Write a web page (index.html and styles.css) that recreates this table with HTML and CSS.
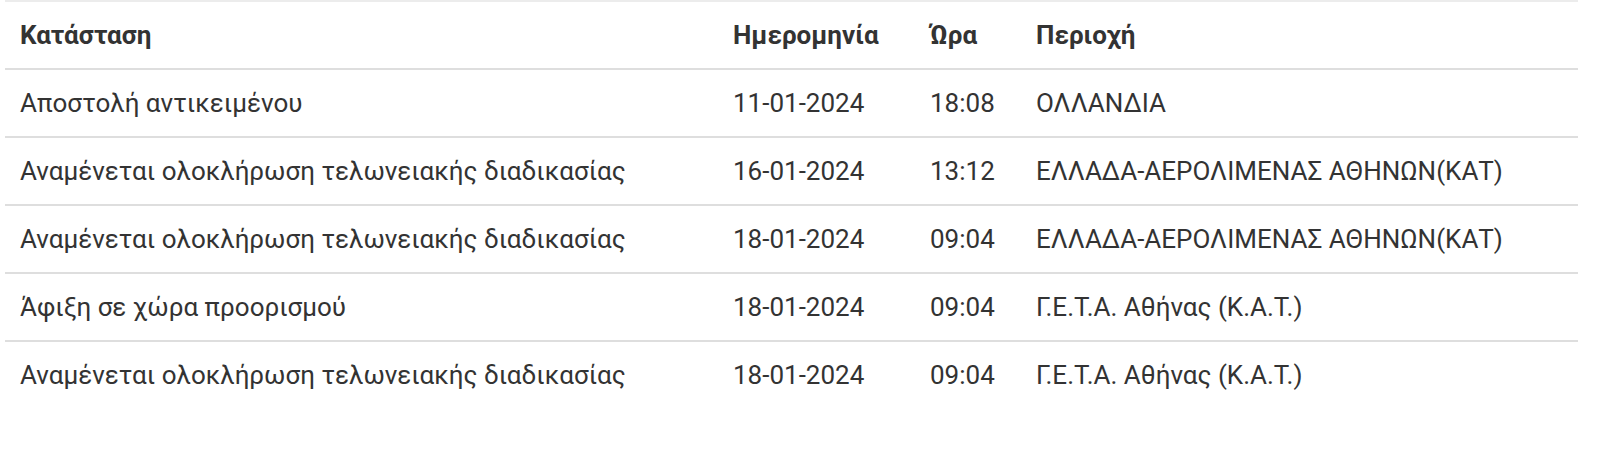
FILE: index.html
```html
<!DOCTYPE html>
<html lang="el">
<head>
<meta charset="utf-8">
<link rel="stylesheet" href="styles.css">
</head>
<body>
<div class="wrap">
  <table class="track">
    <colgroup>
      <col class="c-status"><col class="c-date"><col class="c-time"><col class="c-area">
    </colgroup>
    <thead>
      <tr><th>Κατάσταση</th><th>Ημερομηνία</th><th>Ώρα</th><th>Περιοχή</th></tr>
    </thead>
    <tbody>
      <tr><td>Αποστολή αντικειμένου</td><td>11-01-2024</td><td>18:08</td><td>ΟΛΛΑΝΔΙΑ</td></tr>
      <tr><td>Αναμένεται ολοκλήρωση τελωνειακής διαδικασίας</td><td>16-01-2024</td><td>13:12</td><td>ΕΛΛΑΔΑ-ΑΕΡΟΛΙΜΕΝΑΣ ΑΘΗΝΩΝ(ΚΑΤ)</td></tr>
      <tr><td>Αναμένεται ολοκλήρωση τελωνειακής διαδικασίας</td><td>18-01-2024</td><td>09:04</td><td>ΕΛΛΑΔΑ-ΑΕΡΟΛΙΜΕΝΑΣ ΑΘΗΝΩΝ(ΚΑΤ)</td></tr>
      <tr><td>Άφιξη σε χώρα προορισμού</td><td>18-01-2024</td><td>09:04</td><td>Γ.Ε.Τ.Α. Αθήνας (Κ.Α.Τ.)</td></tr>
      <tr><td>Αναμένεται ολοκλήρωση τελωνειακής διαδικασίας</td><td>18-01-2024</td><td>09:04</td><td>Γ.Ε.Τ.Α. Αθήνας (Κ.Α.Τ.)</td></tr>
    </tbody>
  </table>
</div>
</body>
</html>
```

FILE: styles.css
```css
html, body {
  margin: 0;
  padding: 0;
  background: #fff;
}
body {
  font-family: Roboto, "Noto Sans", sans-serif;
  color: #333;
}
.wrap {
  padding-left: 5px;
  width: 1573px;
}
.track {
  width: 100%;
  border-collapse: collapse;
  table-layout: fixed;
  border-top: 2px solid #ececec;
}
.c-status { width: 713px; }
.c-date { width: 197px; }
.c-time { width: 106px; }
.track th, .track td {
  text-align: left;
  padding: 0 0 0 15px;
  height: 66px;
  border-bottom: 2px solid #dedede;
  vertical-align: middle;
  white-space: nowrap;
  font-size: 26px;
}
.track tbody tr:last-child td {
  border-bottom: none;
}
.track th {
  font-weight: 700;
  color: #333;
}
.track td {
  font-weight: 400;
  color: #333;
}
```
